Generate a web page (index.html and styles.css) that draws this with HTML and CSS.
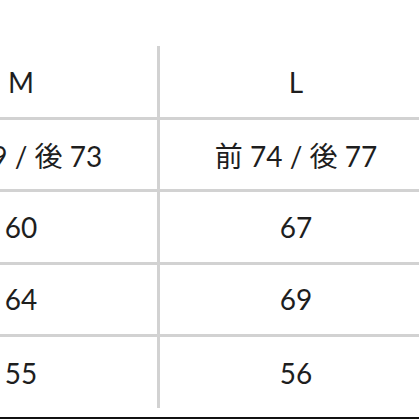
FILE: index.html
```html
<!DOCTYPE html>
<html>
<head>
<meta charset="utf-8">
<link rel="stylesheet" href="styles.css">
</head>
<body>
<div class="page">
  <div class="table">
    <div class="row head">
      <div class="cell left">M</div>
      <div class="cell">L</div>
    </div>
    <div class="row">
      <div class="cell left">前 69 / 後 73</div>
      <div class="cell">前 74 / 後 77</div>
    </div>
    <div class="row">
      <div class="cell left">60</div>
      <div class="cell">67</div>
    </div>
    <div class="row">
      <div class="cell left">64</div>
      <div class="cell">69</div>
    </div>
    <div class="row last">
      <div class="cell left">55</div>
      <div class="cell">56</div>
    </div>
  </div>
  <div class="rule"></div>
</div>
</body>
</html>
```

FILE: styles.css
```css
html, body {
  margin: 0;
  padding: 0;
  background: #fff;
}
.page {
  width: 419px;
  height: 419px;
  overflow: hidden;
  display: flex;
  flex-direction: column;
}
.table {
  margin-top: 46px;
  margin-left: -115px;
  width: 547px;
  display: flex;
  flex-direction: column;
  font-family: Lato, "Noto Sans CJK JP", sans-serif;
  font-size: 28px;
  color: #1e1e1e;
}
.row {
  display: flex;
  height: 69.4px;
  border-bottom: 3px solid #d2d2d2;
}
.row.head {
  height: 71px;
}
.row.last {
  height: 71px;
  border-bottom: none;
}
.cell {
  width: 272px;
  display: flex;
  align-items: center;
  justify-content: center;
  white-space: nowrap;
}
.cell.left {
  border-right: 3px solid #d2d2d2;
}
.rule {
  margin-top: 9px;
  height: 2px;
  background: #111;
  width: 419px;
}
```
